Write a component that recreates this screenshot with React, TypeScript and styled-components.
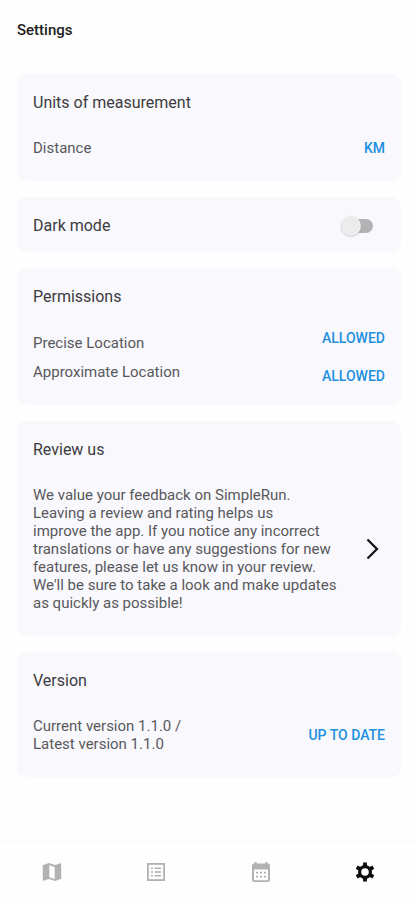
import React, { useState } from "react";
import styled, { createGlobalStyle } from "styled-components";

const GlobalStyle = createGlobalStyle`
  *, *::before, *::after { box-sizing: border-box; }
  body {
    margin: 0;
    background: #fefefe;
    color: #3c3c40;
    font-family: Roboto, "Liberation Sans", sans-serif;
  }
  button { font: inherit; border: 0; background: none; padding: 0; cursor: pointer; }
`;

const Screen = styled.div`
  min-height: 100vh;
  display: flex;
  flex-direction: column;
`;

const Header = styled.header`
  padding: 20px 17px 0;
`;

const PageTitle = styled.h1`
  margin: 0;
  font-size: 15px;
  line-height: 20px;
  font-weight: 500;
  color: #1c1c1c;
`;

const Sections = styled.main`
  flex: 1;
  display: flex;
  flex-direction: column;
  gap: 16px;
  padding: 34px 16px 24px 17px;
`;

const Card = styled.section`
  padding: 17px 16px 15px;
  border-radius: 9px;
  background: #f8f8fd;
`;

const SwitchCard = styled(Card)`
  display: flex;
  align-items: center;
  justify-content: space-between;
`;

const CardTitle = styled.h2`
  margin: 0;
  font-size: 16px;
  line-height: 23px;
  font-weight: 400;
`;

const CardBody = styled.div`
  display: flex;
  align-items: center;
  justify-content: space-between;
  gap: 16px;
  margin-top: 16px;
`;

const Labels = styled.div`
  display: flex;
  flex-direction: column;
  gap: 11px;
  padding: 9px 0;
`;

const Label = styled.p`
  margin: 0;
  font-size: 15px;
  line-height: 18px;
  font-weight: 400;
  color: #58585c;
  white-space: pre-line;
`;

const Actions = styled.div`
  display: flex;
  flex-direction: column;
  align-items: flex-end;
  gap: 10px;
`;

const Action = styled.button`
  && {
    height: 28px;
    font-size: 14px;
    line-height: 18px;
    font-weight: 500;
    color: #1e90e0;
    text-transform: uppercase;
    white-space: nowrap;
  }
`;

const IconAction = styled.button`
  display: flex;
  color: #111;
`;

const Switch = styled.input`
  appearance: none;
  flex: none;
  display: flex;
  align-items: center;
  width: 32px;
  height: 14px;
  margin: 0 12px 0 0;
  border-radius: 7px;
  background: #b3b3b5;
  cursor: pointer;

  &::before {
    content: "";
    flex: none;
    width: 20px;
    height: 20px;
    border-radius: 50%;
    background: #ececec;
    box-shadow: 0 1px 2px rgba(0, 0, 0, 0.16);
  }
  &:checked { justify-content: flex-end; background: #9ccdf2; }
  &:checked::before { background: #1e90e0; }
`;

const TabBar = styled.nav`
  position: sticky;
  bottom: 0;
  display: grid;
  grid-template-columns: repeat(4, 1fr);
  height: 59px;
  border-top: 1px solid #f8f8f8;
  background: #fefefe;
`;

const Tab = styled.button<{ $active?: boolean }>`
  && {
    display: flex;
    align-items: center;
    justify-content: center;
    padding-top: 2px;
    color: ${(p) => (p.$active ? "#0c0c0c" : "#b2b2b2")};
  }
`;

const MapIcon = () => (
  <svg width="20" height="20" viewBox="0 0 20 20" fill="currentColor" aria-hidden="true">
    <path
      fillRule="evenodd"
      d="M.8 3.2 6.6 1l6.8 1.9L19.2 1v15.8L13.4 19l-6.8-2.1L.8 19zM7.3 3.2v12l5.4 1.7v-12z"
    />
  </svg>
);

const ListIcon = () => (
  <svg width="20" height="20" viewBox="0 0 20 20" fill="none" stroke="currentColor" aria-hidden="true">
    <rect x="1.9" y="1.9" width="16.2" height="16.2" strokeWidth="1.8" />
    <path d="M5 6.2h2M5 10h2M5 13.8h2M8.6 6.2H15M8.6 10H15M8.6 13.8H15" strokeWidth="1.5" />
  </svg>
);

const CalendarIcon = () => (
  <svg width="20" height="22" viewBox="0 0 20 22" fill="currentColor" aria-hidden="true">
    <path
      fillRule="evenodd"
      d="M3.5 1h2.2v1.6h8.6V1h2.2v1.6h.5A2 2 0 0 1 19 4.6V19a2 2 0 0 1-2 2H3a2 2 0 0 1-2-2V4.6a2 2 0 0 1 2-2h.5zM3 8.6V18.4a.8.8 0 0 0 .8.8h12.4a.8.8 0 0 0 .8-.8V8.6z"
    />
    <path d="M5 10.8h2v1.6H5zM9 10.8h2v1.6H9zM13 10.8h2v1.6h-2zM5 14.8h2v1.6H5zM9 14.8h2v1.6H9zM13 14.8h2v1.6h-2z" />
  </svg>
);

const GearIcon = () => (
  <svg width="20" height="20" viewBox="0 0 20 20" fill="none" stroke="currentColor" aria-hidden="true">
    <circle cx="10" cy="10" r="5.4" strokeWidth="3.2" />
    <path
      d="M10 4V.4M10 16v3.600M4.800 7 1.700 5.200M15.200 13l3.100 1.800M4.800 13 1.700 14.800M15.200 7l3.100-1.800"
      strokeWidth="3.800"
    />
  </svg>
);

const ChevronIcon = () => (
  <svg width="25" height="24" viewBox="0 0 25 24" fill="none" stroke="currentColor" strokeWidth="2.200" aria-hidden="true">
    <path d="m7.500 2.500 9.500 9.500-9.500 9.500" />
  </svg>
);

const REVIEW_TEXT = [
  "We value your feedback on SimpleRun.",
  "Leaving a review and rating helps us",
  "improve the app. If you notice any incorrect",
  "translations or have any suggestions for new",
  "features, please let us know in your review.",
  "We'll be sure to take a look and make updates",
  "as quickly as possible!",
].join("\n");

export default function App() {
  const [dark, setDark] = useState(false);

  return (
    <>
      <GlobalStyle />
      <Screen>
        <Header>
          <PageTitle>Settings</PageTitle>
        </Header>

        <Sections>
          <Card>
            <CardTitle>Units of measurement</CardTitle>
            <CardBody>
              <Labels>
                <Label id="distance">Distance</Label>
              </Labels>
              <Action aria-describedby="distance">KM</Action>
            </CardBody>
          </Card>

          <SwitchCard>
            <CardTitle as="label" htmlFor="dark-mode">Dark mode</CardTitle>
            <Switch
              id="dark-mode"
              type="checkbox"
              role="switch"
              checked={dark}
              onChange={(e) => setDark(e.target.checked)}
            />
          </SwitchCard>

          <Card>
            <CardTitle>Permissions</CardTitle>
            <CardBody>
              <Labels>
                <Label id="precise">Precise Location</Label>
                <Label id="approximate">Approximate Location</Label>
              </Labels>
              <Actions>
                <Action aria-describedby="precise">Allowed</Action>
                <Action aria-describedby="approximate">Allowed</Action>
              </Actions>
            </CardBody>
          </Card>

          <Card>
            <CardTitle>Review us</CardTitle>
            <CardBody>
              <Labels>
                <Label>{REVIEW_TEXT}</Label>
              </Labels>
              <IconAction aria-label="Write a review">
                <ChevronIcon />
              </IconAction>
            </CardBody>
          </Card>

          <Card>
            <CardTitle>Version</CardTitle>
            <CardBody>
              <Labels>
                <Label id="version">{"Current version 1.1.0 /\nLatest version 1.1.0"}</Label>
              </Labels>
              <Action aria-describedby="version">Up to date</Action>
            </CardBody>
          </Card>
        </Sections>

        <TabBar aria-label="Main">
          <Tab aria-label="Map"><MapIcon /></Tab>
          <Tab aria-label="Runs"><ListIcon /></Tab>
          <Tab aria-label="Calendar"><CalendarIcon /></Tab>
          <Tab aria-label="Settings" aria-current="page" $active><GearIcon /></Tab>
        </TabBar>
      </Screen>
    </>
  );
}
